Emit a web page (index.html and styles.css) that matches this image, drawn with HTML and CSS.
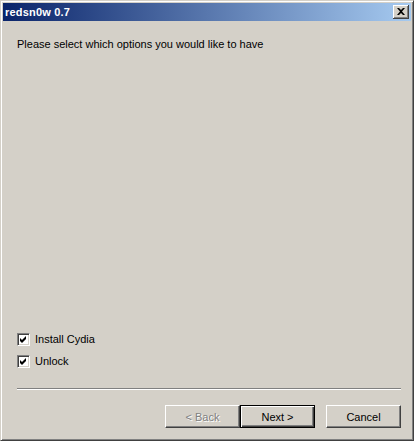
FILE: index.html
```html
<!DOCTYPE html>
<html lang="en">
<head>
  <meta charset="UTF-8">
  <title>redsn0w 0.7</title>
  <link rel="stylesheet" href="styles.css">
</head>
<body>
  <div class="window">
    <div class="titlebar">
      <span class="title">redsn0w 0.7</span>
      <button class="close" aria-label="Close">
        <svg width="8" height="7" viewBox="0 0 8 7"><path d="M0 0h2l2 2 2-2h2L5 3.5 8 7H6L4 5 2 7H0l3-3.5z" fill="#000"/></svg>
      </button>
    </div>

    <div class="content">
      <p class="intro">Please select which options you would like to have</p>
      <div class="spacer"></div>

      <div class="options">
        <label class="option">
          <span class="check"><svg width="7" height="7" viewBox="0 0 7 7"><path d="M0 2l2 2 4-4v3L2 7 0 5z" fill="#000"/></svg></span>
          Install Cydia
        </label>
        <label class="option">
          <span class="check"><svg width="7" height="7" viewBox="0 0 7 7"><path d="M0 2l2 2 4-4v3L2 7 0 5z" fill="#000"/></svg></span>
          Unlock
        </label>
      </div>

      <div class="separator"></div>

      <div class="buttons">
        <button class="btn disabled">&lt; Back</button>
        <button class="btn default">Next &gt;</button>
        <button class="btn cancel">Cancel</button>
      </div>
    </div>
  </div>
</body>
</html>
```

FILE: styles.css
```css
* { box-sizing: border-box; margin: 0; padding: 0; }
body {
  font-family: 'Liberation Sans', Arial, sans-serif;
  font-size: 11px;
  color: #000;
  background: #d4d0c8;
}
.window {
  width: 414px;
  height: 441px;
  display: flex;
  flex-direction: column;
  background: #d4d0c8;
  border: 1px solid;
  border-color: #d4d0c8 #404040 #404040 #d4d0c8;
  box-shadow: inset 1px 1px #fff, inset -1px -1px #808080;
  padding: 2px;
}
.titlebar {
  height: 18px;
  display: flex;
  align-items: center;
  justify-content: space-between;
  padding: 0 2px 0 2px;
  background: linear-gradient(to right, #0a246a, #a6caf0);
}
.title {
  color: #fff;
  font-weight: bold;
  font-size: 11px;
  letter-spacing: 0.2px;
}
.close {
  width: 16px;
  height: 14px;
  display: flex;
  align-items: center;
  justify-content: center;
  background: #d4d0c8;
  border: none;
  box-shadow: inset -1px -1px #404040, inset 1px 1px #fff, inset -2px -2px #808080;
  padding: 0 1px 1px 0;
}
.content {
  flex: 1;
  display: flex;
  flex-direction: column;
  padding: 17px 10px 10px 14px;
}
.intro {
  line-height: 13px;
}
.spacer {
  flex: 1;
}
.options {
  display: flex;
  flex-direction: column;
  gap: 9px;
}
.option {
  display: flex;
  align-items: center;
  gap: 5px;
  height: 13px;
  line-height: 13px;
}
.check {
  width: 13px;
  height: 13px;
  display: flex;
  align-items: center;
  justify-content: center;
  background: #fff;
  border: 1px solid;
  border-color: #808080 #fff #fff #808080;
  box-shadow: inset 1px 1px #404040, inset -1px -1px #d4d0c8;
}
.separator {
  margin-top: 20px;
  height: 2px;
  border-top: 1px solid #808080;
  border-bottom: 1px solid #fff;
}
.buttons {
  display: flex;
  justify-content: flex-end;
  margin-top: 15px;
}
.btn {
  width: 75px;
  height: 23px;
  font-family: 'Liberation Sans', Arial, sans-serif;
  font-size: 11px;
  color: #000;
  background: #d4d0c8;
  border: 1px solid;
  border-color: #fff #404040 #404040 #fff;
  box-shadow: inset -1px -1px #808080;
}
.btn.default {
  border: 1px solid #000;
  box-shadow: inset 1px 1px #fff, inset -1px -1px #404040, inset -2px -2px #808080;
}
.btn.disabled {
  color: #808080;
  text-shadow: 1px 1px #fff;
}
.btn.cancel {
  margin-left: 11px;
}
```
